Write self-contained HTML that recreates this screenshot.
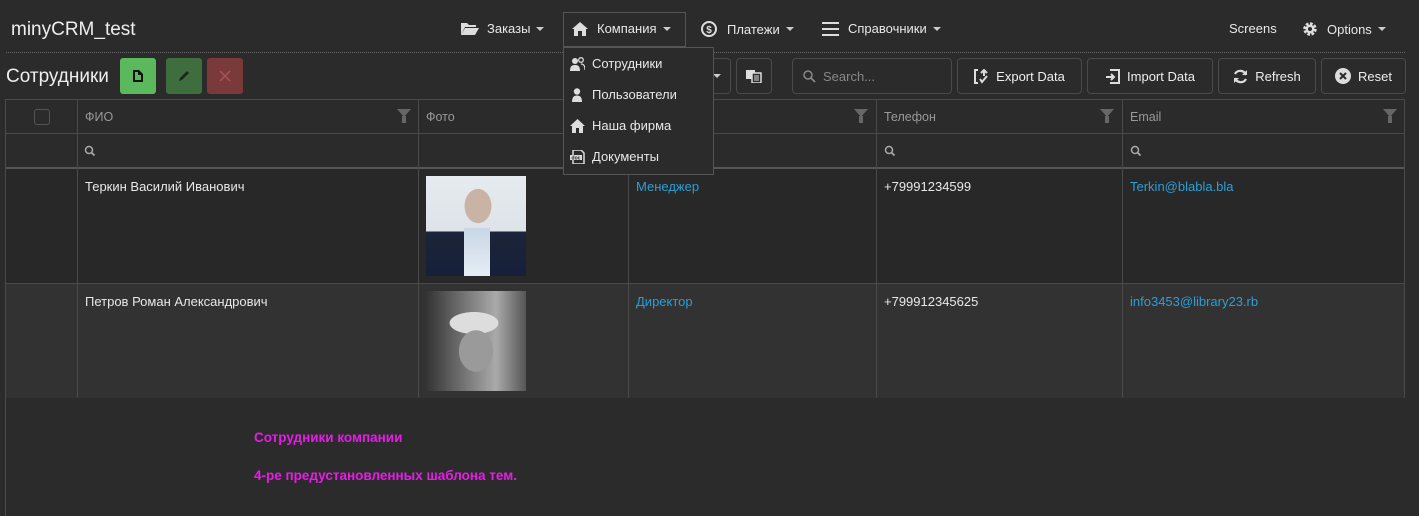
<!DOCTYPE html>
<html><head><meta charset="utf-8"><style>
*{box-sizing:border-box;margin:0;padding:0}
body{width:1419px;height:516px;background:#2b2b2b;color:#e8e8e8;font-family:"Liberation Sans",sans-serif;font-size:13px;position:relative;overflow:hidden}
.a{position:absolute;white-space:nowrap}
.btn{position:absolute;border:1px solid #4a4a4a;border-radius:4px;height:36px;top:58px;display:flex;align-items:center;justify-content:center;gap:7px;font-size:13px;color:#eee}
.vl{position:absolute;width:1px;background:#4a4a4a}
.hl{position:absolute;height:1px;background:#4a4a4a}
.hd{color:#999;font-size:12.5px}
.lnk{color:#2a9fd6}
.fil{position:absolute;top:109px;width:0;height:0;border-left:7px solid transparent;border-right:7px solid transparent;border-top:8px solid #666}
.fil:after{content:"";position:absolute;left:-2px;top:-1px;width:4px;height:7px;background:#666}
.car{display:inline-block;width:0;height:0;border-left:4px solid transparent;border-right:4px solid transparent;border-top:4px solid #ccc;margin-left:6px;vertical-align:middle}
.mi{position:absolute;left:570px;display:flex;align-items:center;gap:7px;font-size:13px}
</style></head><body>
<div class="a" style="left:11px;top:19px;font-size:19px;color:#eee">minyCRM_test</div>
<div class="a" style="left:6px;top:52px;width:1399px;border-top:1px dotted #666"></div>

<div class="a" style="left:460px;top:21px;display:flex;align-items:center"><svg width="20" height="14" viewBox="0 0 20 14"><path d="M1 1h6l2 2h7v2H5L1 13z" fill="#ddd"/><path d="M5 6h14l-4 7H1z" fill="#ddd"/></svg><span style="margin-left:7px">Заказы</span><span class="car"></span></div>
<div class="a" style="left:563px;top:12px;width:123px;height:35px;border:1px solid #555"></div>
<div class="a" style="left:572px;top:21px;display:flex;align-items:center"><svg width="16" height="14" viewBox="0 0 16 14"><path d="M8 0L0 7h2v7h4V9h4v5h4V7h2z" fill="#ddd"/></svg><span style="margin-left:9px">Компания</span><span class="car"></span></div>
<div class="a" style="left:701px;top:21px;display:flex;align-items:center"><svg width="16" height="16" viewBox="0 0 16 16"><circle cx="8" cy="8" r="7" fill="none" stroke="#ddd" stroke-width="2"/><text x="8" y="12" font-size="10" font-weight="bold" fill="#ddd" text-anchor="middle" font-family="Liberation Sans">$</text></svg><span style="margin-left:10px">Платежи</span><span class="car"></span></div>
<div class="a" style="left:822px;top:21px;display:flex;align-items:center"><svg width="17" height="14" viewBox="0 0 17 14"><path d="M0 1h17M0 7h17M0 13h17" stroke="#ddd" stroke-width="2"/></svg><span style="margin-left:9px">Справочники</span><span class="car"></span></div>
<div class="a" style="left:1229px;top:21px">Screens</div>
<div class="a" style="left:1302px;top:21px;display:flex;align-items:center"><svg width="16" height="16" viewBox="0 0 16 16"><circle cx="8" cy="8" r="5" fill="none" stroke="#ddd" stroke-width="3.5" stroke-dasharray="2.5 1.4"/><circle cx="8" cy="8" r="4.5" fill="#ddd"/><circle cx="8" cy="8" r="2" fill="#2b2b2b"/></svg><span style="margin-left:9px">Options</span><span class="car"></span></div>

<div class="a" style="left:6px;top:66px;font-size:19px;color:#eee">Сотрудники</div>
<div class="a" style="left:120px;top:58px;width:36px;height:36px;background:#5cb85c;border-radius:3px;display:flex;align-items:center;justify-content:center"><svg width="10" height="12"><path d="M0 0h6l4 4v8H0z" fill="#111"/><path d="M2 2h3v3h3v5H2z" fill="#5cb85c"/></svg></div>
<div class="a" style="left:166px;top:58px;width:36px;height:36px;background:#3e6e3e;border-radius:3px;display:flex;align-items:center;justify-content:center"><svg width="12" height="12"><path d="M1 11l1-3 7-7 2 2-7 7z" fill="#222"/></svg></div>
<div class="a" style="left:207px;top:58px;width:36px;height:36px;background:#7a3a3a;border-radius:3px;display:flex;align-items:center;justify-content:center"><svg width="12" height="12"><path d="M1 1l10 10M11 1L1 11" stroke="#a55" stroke-width="1.5"/></svg></div>

<div class="btn" style="left:690px;width:41px;border-left:none;border-radius:0 4px 4px 0"><span class="car" style="margin-left:14px"></span></div>
<div class="btn" style="left:736px;width:36px"><svg width="16" height="14"><rect x="0" y="1" width="9" height="9" fill="#ddd"/><rect x="6" y="4" width="9" height="10" fill="#2b2b2b" stroke="#ddd" stroke-width="1.5"/><path d="M8 7h5M8 9h5M8 11h5" stroke="#ddd"/></svg></div>
<div class="btn" style="left:792px;width:160px;justify-content:flex-start;padding-left:10px;color:#888"><svg width="13" height="13"><circle cx="5" cy="5" r="4" fill="none" stroke="#888" stroke-width="1.5"/><path d="M8 8l4 4" stroke="#888" stroke-width="1.8"/></svg>Search...</div>
<div class="btn" style="left:957px;width:125px"><svg width="15" height="15"><path d="M4 1H1v13h3M7 4l3-3 3 3M10 1v6" stroke="#ddd" stroke-width="2" fill="none"/><path d="M6 10l2 3 5-6" stroke="#ddd" stroke-width="2" fill="none"/></svg>Export Data</div>
<div class="btn" style="left:1087px;width:126px"><svg width="15" height="15"><path d="M5 1h9v13H5M1 8h8M6 5l3 3-3 3" stroke="#ddd" stroke-width="2" fill="none"/></svg>Import Data</div>
<div class="btn" style="left:1218px;width:98px"><svg width="15" height="15"><path d="M13 6A6 6 0 0 0 2 5M2 9a6 6 0 0 0 11 1" stroke="#ddd" stroke-width="2.2" fill="none"/><path d="M14 1v5h-5zM1 14V9h5z" fill="#ddd"/></svg>Refresh</div>
<div class="btn" style="left:1321px;width:85px"><svg width="16" height="16"><circle cx="8" cy="8" r="8" fill="#ddd"/><path d="M5 5l6 6M11 5l-6 6" stroke="#2b2b2b" stroke-width="2"/></svg>Reset</div>

<!-- table -->
<div class="a" style="left:6px;top:99px;width:1399px;height:69px;background:#2b2b2b"></div>
<div class="a" style="left:6px;top:169px;width:1399px;height:114px;background:#282828"></div>
<div class="a" style="left:6px;top:283px;width:1399px;height:115px;background:#323232"></div>
<div class="hl" style="left:6px;top:99px;width:1399px"></div>
<div class="hl" style="left:6px;top:133px;width:1399px"></div>
<div class="hl" style="left:6px;top:167px;width:1399px;height:2px;background:#555"></div>
<div class="hl" style="left:6px;top:283px;width:1399px"></div>
<div class="vl" style="left:5px;top:99px;height:417px"></div>
<div class="vl" style="left:1404px;top:99px;height:299px"></div>
<div class="vl" style="left:77px;top:99px;height:299px"></div>
<div class="vl" style="left:418px;top:99px;height:299px"></div>
<div class="vl" style="left:628px;top:99px;height:299px"></div>
<div class="vl" style="left:876px;top:99px;height:299px"></div>
<div class="vl" style="left:1122px;top:99px;height:299px"></div>
<div class="a" style="left:34px;top:109px;width:16px;height:16px;border:1px solid #555;border-radius:3px"></div>
<div class="a hd" style="left:85px;top:110px">ФИО</div><div class="fil" style="left:397px"></div>
<div class="a hd" style="left:426px;top:110px">Фото</div>
<div class="fil" style="left:854px"></div>
<div class="a hd" style="left:884px;top:110px">Телефон</div><div class="fil" style="left:1100px"></div>
<div class="a hd" style="left:1130px;top:110px">Email</div><div class="fil" style="left:1383px"></div>
<svg class="a" style="left:84px;top:145px" width="12" height="12"><circle cx="5" cy="5" r="3.5" fill="none" stroke="#aaa" stroke-width="1.5"/><path d="M7.5 7.5l3 3" stroke="#aaa" stroke-width="1.8"/></svg>
<svg class="a" style="left:884px;top:145px" width="12" height="12"><circle cx="5" cy="5" r="3.5" fill="none" stroke="#aaa" stroke-width="1.5"/><path d="M7.5 7.5l3 3" stroke="#aaa" stroke-width="1.8"/></svg>
<svg class="a" style="left:1130px;top:145px" width="12" height="12"><circle cx="5" cy="5" r="3.5" fill="none" stroke="#aaa" stroke-width="1.5"/><path d="M7.5 7.5l3 3" stroke="#aaa" stroke-width="1.8"/></svg>

<div class="a" style="left:85px;top:179px">Теркин Василий Иванович</div>
<div class="a" style="left:426px;top:176px;width:100px;height:100px;background:radial-gradient(ellipse 22px 28px at 52px 30px,#c9b3a5 60%,transparent 62%),linear-gradient(180deg,#e6ebef 0,#dde3e8 55%,#1b2438 56%,#16203a 100%)"><div style="position:absolute;left:38px;top:52px;width:26px;height:48px;background:linear-gradient(#c8d6e6,#e6eef5)"></div></div>
<div class="a lnk" style="left:636px;top:179px">Менеджер</div>
<div class="a" style="left:884px;top:179px">+79991234599</div>
<div class="a lnk" style="left:1130px;top:179px">Terkin@blabla.bla</div>

<div class="a" style="left:85px;top:294px">Петров Роман Александрович</div>
<div class="a" style="left:426px;top:291px;width:100px;height:100px;background:radial-gradient(ellipse 28px 34px at 50px 60px,#9a9a9a 60%,transparent 62%),radial-gradient(ellipse 40px 18px at 48px 32px,#ddd 60%,transparent 62%),linear-gradient(90deg,#333,#777 40%,#aaa 70%,#555)"></div>
<div class="a lnk" style="left:636px;top:294px">Директор</div>
<div class="a" style="left:884px;top:294px">+799912345625</div>
<div class="a lnk" style="left:1130px;top:294px">info3453@library23.rb</div>

<div class="a" style="left:254px;top:430px;color:#e81ce8;font-weight:bold;font-size:13.5px">Сотрудники компании</div>
<div class="a" style="left:254px;top:468px;color:#e81ce8;font-weight:bold;font-size:13.5px">4-ре предустановленных шаблона тем.</div>

<!-- dropdown -->
<div class="a" style="left:563px;top:47px;width:151px;height:128px;background:#2b2b2b;border:1px solid #555"></div>
<div class="mi" style="top:56px"><svg width="15" height="14"><circle cx="5" cy="4" r="3" fill="#ddd"/><path d="M0 14c0-5 2-6 5-6s5 1 5 6z" fill="#ddd"/><circle cx="11" cy="3" r="2.3" fill="none" stroke="#ddd" stroke-width="1.3"/><path d="M11 7c3 0 4 2 4 6" stroke="#ddd" stroke-width="1.3" fill="none"/></svg>Сотрудники</div>
<div class="mi" style="top:87px"><svg width="15" height="14"><circle cx="7" cy="3.5" r="3.2" fill="#ddd"/><path d="M2 14c0-5 2-6.5 5-6.5s5 1.5 5 6.5z" fill="#ddd"/></svg>Пользователи</div>
<div class="mi" style="top:118px"><svg width="15" height="14"><path d="M7.5 0L0 7h2v7h4V9h3v5h4V7h2z" fill="#ddd"/></svg>Наша фирма</div>
<div class="mi" style="top:149px"><svg width="15" height="14"><path d="M3 0h8l3 3v11H3z" fill="none" stroke="#ddd" stroke-width="1.5"/><rect x="0" y="5" width="12" height="5" fill="#ddd"/><text x="6" y="9.3" font-size="5" fill="#222" text-anchor="middle" font-family="Liberation Sans" font-weight="bold">doc</text></svg>Документы</div>
</body></html>
